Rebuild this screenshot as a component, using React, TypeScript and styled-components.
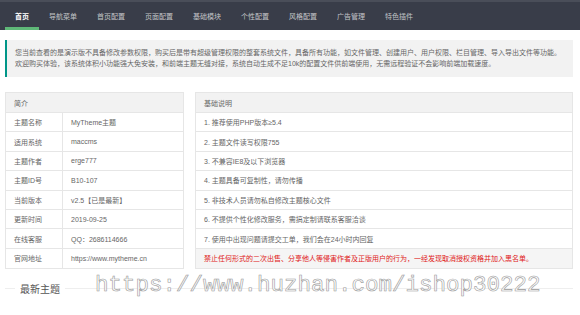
import styled, { createGlobalStyle } from "styled-components";

const GlobalStyle = createGlobalStyle`
  html, body {
    margin: 0;
    padding: 0;
    background: #fff;
  }
  body {
    font-family: "Liberation Sans", "Noto Sans CJK SC", sans-serif;
    color: #666;
  }
`;

const Page = styled.div`
  position: relative;
  width: 580px;
  height: 315px;
  overflow: hidden;
`;

const Nav = styled.nav`
  display: flex;
  height: 28px;
  padding: 0 5px;
  background: #393d49;
  border-top: 2px solid #4a4e59;
`;

const NavItem = styled.a<{ $active?: boolean }>`
  display: flex;
  align-items: center;
  padding: 0 10px;
  font-size: 7px;
  color: ${(p) => (p.$active ? "#fff" : "rgba(255, 255, 255, 0.7)")};
  font-weight: ${(p) => (p.$active ? 700 : 400)};
  box-shadow: ${(p) => (p.$active ? "inset 0 -3px 0 #5fb878" : "none")};
  text-decoration: none;
`;

const Notice = styled.div`
  margin: 10px 7px 0 5px;
  padding: 7px 10px 8px 8px;
  background: #f2f2f2;
  border-left: 2px solid #009688;
  font-size: 7px;
  line-height: 11px;
  color: #666;
`;

const Columns = styled.div`
  display: grid;
  grid-template-columns: 179px 1fr;
  gap: 11px;
  margin: 15px 7px 0 5px;
`;

const Table = styled.div`
  border: 1px solid #e6e6e6;
  font-size: 7px;
  color: #666;
`;

const HeadRow = styled.div`
  display: flex;
  align-items: center;
  height: 20px;
  padding: 0 8px;
  background: #f2f2f2;
  border-bottom: 1px solid #e6e6e6;
  box-sizing: border-box;
`;

const Row = styled.div<{ $warn?: boolean }>`
  display: grid;
  grid-template-columns: 57px 1fr;
  height: 19.4px;
  box-sizing: border-box;
  border-bottom: 1px solid #e6e6e6;
  background: ${(p) => (p.$warn ? "#f5f5f5" : "#fff")};
  color: ${(p) => (p.$warn ? "#e02020" : "#666")};

  &:last-child {
    border-bottom: none;
  }
`;

const Cell = styled.div<{ $label?: boolean }>`
  display: flex;
  align-items: center;
  padding: 0 8px;
  border-right: ${(p) => (p.$label ? "1px solid #e6e6e6" : "none")};
  white-space: nowrap;
`;

const NoteRow = styled(Row)`
  grid-template-columns: 1fr;
`;

const SectionTitle = styled.div`
  display: flex;
  align-items: center;
  margin: 12px 7px 0 5px;
  font-size: 10px;
  color: #555;

  &::before,
  &::after {
    content: "";
    height: 1px;
    background: #eee;
  }
  &::before {
    width: 10px;
  }
  &::after {
    flex: 1;
  }

  span {
    padding: 0 5px;
  }
`;

const Watermark = styled.div`
  position: absolute;
  left: 95px;
  top: 274px;
  font-family: "Liberation Mono", monospace;
  font-size: 22.5px;
  line-height: 1;
  color: #fff;
  -webkit-text-stroke: 0.6px #999;
  white-space: nowrap;
  pointer-events: none;
`;

const tabs = ["首页", "导航菜单", "首页配置", "页面配置", "基础模块", "个性配置", "风格配置", "广告管理", "特色插件"];

const info: [string, string][] = [
  ["主题名称", "MyTheme主题"],
  ["适用系统", "maccms"],
  ["主题作者", "erge777"],
  ["主题ID号", "B10-107"],
  ["当前版本", "v2.5【已是最新】"],
  ["更新时间", "2019-09-25"],
  ["在线客服", "QQ：2686114666"],
  ["官网地址", "https://www.mytheme.cn"],
];

const notes = [
  "1. 推荐使用PHP版本≥5.4",
  "2. 主题文件读写权限755",
  "3. 不兼容IE8及以下浏览器",
  "4. 主题具备可复制性，请勿传播",
  "5. 非技术人员请勿私自修改主题核心文件",
  "6. 不提供个性化修改服务，需搞定制请联系客服洽谈",
  "7. 使用中出现问题请提交工单，我们会在24小时内回复",
];

const App = () => {
  return (
    <Page>
      <GlobalStyle />
      <Nav>
        {tabs.map((t, i) => (
          <NavItem key={t} $active={i === 0}>
            {t}
          </NavItem>
        ))}
      </Nav>
      <Notice>
        您当前查看的是演示版不具备修改参数权限，购买后是带有超级管理权限的整套系统文件，具备所有功能，如文件管理、创建用户、用户权限、栏目管理、导入导出文件等功能。
        <br />
        欢迎购买体验，该系统体积小功能强大免安装，和前端主题无缝对接，系统自动生成不足10k的配置文件供前端使用，无需远程验证不会影响前端加载速度。
      </Notice>
      <Columns>
        <Table>
          <HeadRow>简介</HeadRow>
          {info.map(([k, v]) => (
            <Row key={k}>
              <Cell $label>{k}</Cell>
              <Cell>{v}</Cell>
            </Row>
          ))}
        </Table>
        <Table>
          <HeadRow>基础说明</HeadRow>
          {notes.map((n) => (
            <NoteRow key={n}>
              <Cell>{n}</Cell>
            </NoteRow>
          ))}
          <NoteRow $warn>
            <Cell>禁止任何形式的二次出售、分享他人等侵害作者及正版用户的行为，一经发现取消授权资格并加入黑名单。</Cell>
          </NoteRow>
        </Table>
      </Columns>
      <SectionTitle>
        <span>最新主题</span>
      </SectionTitle>
      <Watermark>https://www.huzhan.com/ishop30222</Watermark>
    </Page>
  );
};

export default App;
